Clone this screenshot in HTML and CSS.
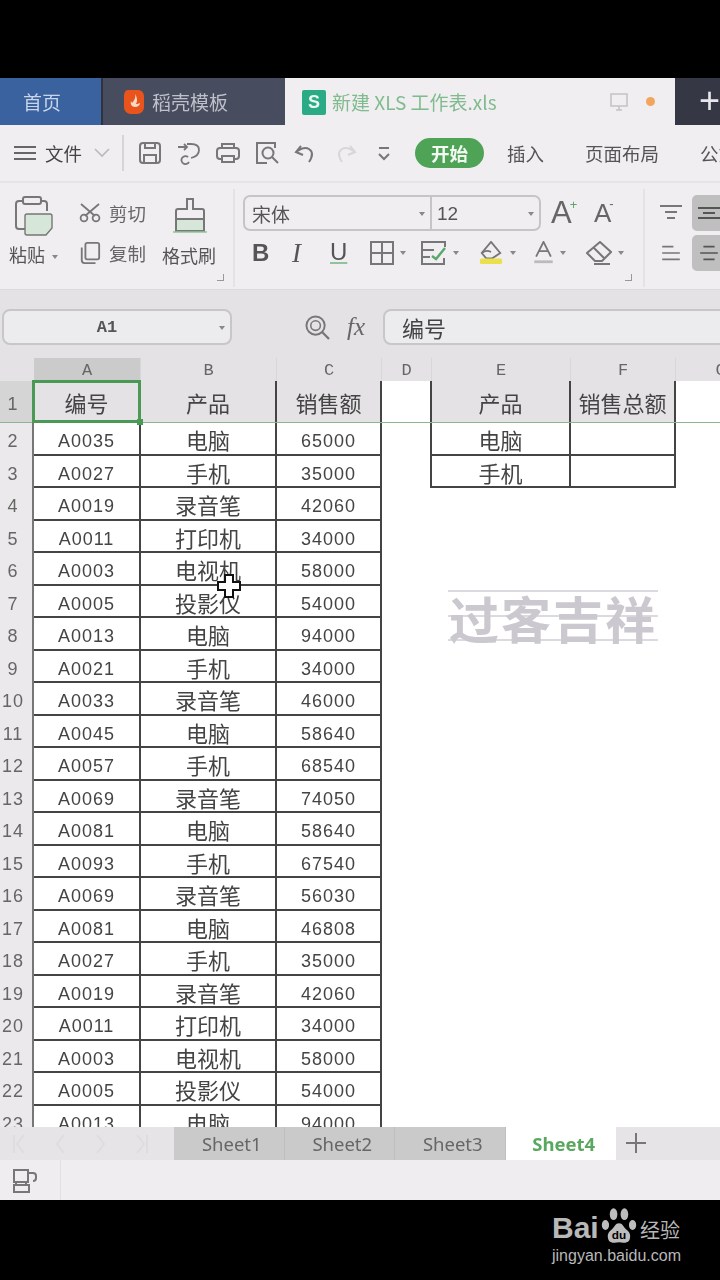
FILE: index.html
```html
<!DOCTYPE html>
<html lang="zh-CN">
<head>
    <meta charset="UTF-8">
    <meta name="viewport" content="width=device-width, initial-scale=1.0">
    <title>新建 XLS 工作表.xls</title>
    <link rel="stylesheet" href="styles.css">
</head>
<body>
    <div class="app">
        <!-- title tabs -->
        <div class="titlebar">
            <div class="tab-home">首页</div>
            <div class="tab-tpl">
                <svg class="tpl-logo" viewBox="0 0 22 26"><path d="M5 1h10c4 0 6 3 6 7v10c0 4-3 7-7 7H8c-4 0-7-3-7-7V8c0-4 1-7 4-7z" fill="#e8541c"/><path d="M12 5c1 4-1 7-3 9l-1-2c-1 3 1 6 4 6 3 0 5-2 5-4-2 1-3 1-4 1 2-3 1-7-1-10z" fill="#fbd9c4"/></svg>
                <span>稻壳模板</span>
            </div>
            <div class="tab-doc">
                <div class="s-logo">S</div>
                <span class="doc-name">新建 XLS 工作表.xls</span>
                <svg class="doc-screen" viewBox="0 0 20 20"><path d="M2 2h16v12H2zM10 14v4M7 18h6" fill="none" stroke="#c4c4c4" stroke-width="1.6"/></svg>
                <i class="doc-dot"></i>
            </div>
            <div class="tab-add">+</div>
        </div>

        <!-- quick access + menu tabs -->
        <div class="toolbar">
            <svg class="ico-menu" viewBox="0 0 22 16"><path d="M0 2h22M0 8h22M0 14h22" stroke="#666" stroke-width="2"/></svg>
            <span class="file-label">文件</span>
            <svg class="ico-chev" viewBox="0 0 16 10"><path d="M1 1l7 7 7-7" fill="none" stroke="#bbb" stroke-width="1.6"/></svg>
            <i class="tool-sep"></i>
            <div class="quick">
                <svg viewBox="0 0 24 24"><path d="M2 5q0-3 3-3h14q3 0 3 3v14q0 3-3 3H5q-3 0-3-3zM7 2v5h10V2M6 22v-8h12v8" fill="none" stroke="#777" stroke-width="2"/></svg>
                <svg viewBox="0 0 24 24"><path d="M1 6h9M7 3l3 3-3 3M10 3h4q8 0 8 6 0 6-8 8M11 16a4 4 0 1 0 1 5" fill="none" stroke="#777" stroke-width="1.8"/></svg>
                <svg viewBox="0 0 24 24"><path d="M6 7V3h12v4M6 18H4q-3 0-3-3V10q0-3 3-3h16q3 0 3 3v5q0 3-3 3h-2M6 15h12v6H6z" fill="none" stroke="#777" stroke-width="2"/></svg>
                <svg viewBox="0 0 24 24"><path d="M20 7V2H2v20h10" fill="none" stroke="#777" stroke-width="2"/><circle cx="13" cy="12" r="5.5" fill="none" stroke="#777" stroke-width="2"/><path d="M17 16l6 6" stroke="#777" stroke-width="2"/></svg>
                <svg viewBox="0 0 24 24"><path d="M7 5L2 11l7 3M2 11q8-6 13-3 6 4 0 13" fill="none" stroke="#777" stroke-width="2"/></svg>
                <svg viewBox="0 0 24 24"><path d="M17 5l5 6-7 3M22 11q-8-6-13-3-6 4 0 13" fill="none" stroke="#d8d6d8" stroke-width="2"/></svg>
                <svg viewBox="0 0 24 24"><path d="M7 7h10M7 13l5 5 5-5" fill="none" stroke="#777" stroke-width="2"/></svg>
            </div>
            <span class="menu-on">开始</span>
            <span class="menu-item item-insert">插入</span>
            <span class="menu-item item-layout">页面布局</span>
            <span class="menu-item item-formula">公式</span>
        </div>

        <!-- ribbon -->
        <div class="ribbon">
            <div class="rgroup clip">
                <div class="paste">
                    <svg class="ico-paste" viewBox="0 0 38 40"><path d="M8 5H4Q1 5 1 8v22q0 3 3 3h6" fill="none" stroke="#777" stroke-width="2"/><path d="M26 5h3q3 0 3 3v7" fill="none" stroke="#777" stroke-width="2"/><rect x="8" y="1" width="18" height="7" rx="2" fill="none" stroke="#777" stroke-width="2"/><path d="M12 18h23q2 0 2 2v12l-6 7H12q-2 0-2-2V20q0-2 2-2z" fill="#d6e6d9" stroke="#777" stroke-width="1.4"/></svg>
                    <span class="rlabel">粘贴<i class="caret"></i></span>
                </div>
                <div class="cutcopy">
                    <div class="mini"><svg viewBox="0 0 22 20"><path d="M20 1L6 13M2 1l14 12" fill="none" stroke="#777" stroke-width="1.8"/><circle cx="5" cy="15" r="3.4" fill="none" stroke="#777" stroke-width="1.8"/><circle cx="17" cy="15" r="3.4" fill="none" stroke="#777" stroke-width="1.8"/></svg><span>剪切</span></div>
                    <div class="mini"><svg viewBox="0 0 22 24"><rect x="6" y="1" width="15" height="18" rx="2" fill="none" stroke="#777" stroke-width="2"/><path d="M2 6v14q0 3 3 3h12" fill="none" stroke="#777" stroke-width="2"/></svg><span>复制</span></div>
                </div>
                <div class="brush">
                    <svg class="ico-brush" viewBox="0 0 36 36"><path d="M15 2h6v10h9q2 0 2 2v8H4v-8q0-2 2-2h9z" fill="none" stroke="#777" stroke-width="2"/><path d="M4 22h28v12H4z" fill="#d6e6d9" stroke="#777" stroke-width="2"/><path d="M1 35h34" stroke="#8fc49b" stroke-width="1.6"/></svg>
                    <span class="rlabel">格式刷</span>
                </div>
                <i class="corner"></i>
            </div>

            <div class="rgroup font">
                <div class="font-top">
                    <div class="font-box">
                        <div class="font-name">宋体<i class="caret"></i></div>
                        <div class="font-size">12<i class="caret"></i></div>
                    </div>
                    <span class="grow">A<sup>+</sup></span>
                    <span class="grow small">A<sup>-</sup></span>
                </div>
                <div class="font-btm">
                    <span class="fb fb-b">B</span>
                    <span class="fb fb-i">I</span>
                    <span class="fb fb-u">U</span>
                    <div class="fmt fmt-border"><svg viewBox="0 0 24 24"><path d="M1 1h22v22H1zM12 1v22M1 12h22" fill="none" stroke="#777" stroke-width="2"/></svg><i class="caret"></i></div>
                    <div class="fmt fmt-cond"><svg viewBox="0 0 26 24"><path d="M24 6V1H1v22h22v-6M1 9h12M1 16h8" fill="none" stroke="#777" stroke-width="2"/><path d="M11 15l4 3 9-11" fill="none" stroke="#5aa869" stroke-width="2.4"/></svg><i class="caret"></i></div>
                    <div class="fmt fmt-fill"><svg viewBox="0 0 26 26"><path d="M13 1l10 12-9 6H8L3 13z" fill="none" stroke="#777" stroke-width="2"/><path d="M3 13q5-4 10-1" fill="none" stroke="#777" stroke-width="2"/><rect x="1" y="19" width="24" height="6" rx="2" fill="#e9e04a"/></svg><i class="caret"></i></div>
                    <div class="fmt fmt-color"><svg viewBox="0 0 22 26"><path d="M3 17L11 1l8 16M6 11h10" fill="none" stroke="#777" stroke-width="2"/><rect x="1" y="21" width="20" height="3" fill="#bbb"/></svg><i class="caret"></i></div>
                    <div class="fmt fmt-erase"><svg viewBox="0 0 26 24"><path d="M14 1l11 10-9 9H9L1 12zM7 6l11 11M8 23h16" fill="none" stroke="#777" stroke-width="2"/></svg><i class="caret"></i></div>
                </div>
                <i class="corner"></i>
            </div>

            <div class="rgroup align">
                <div class="align-row">
                    <svg class="ico-al" viewBox="0 0 22 16"><path d="M0 1h22M5 7h12M7 13h8" stroke="#777" stroke-width="2"/></svg>
                    <span class="al-on"><svg class="ico-al" viewBox="0 0 22 16"><path d="M0 3h22M5 8h12M0 13h22" stroke="#555" stroke-width="2"/></svg></span>
                </div>
                <div class="align-row">
                    <svg class="ico-al" viewBox="0 0 22 20"><path d="M0 2h14M0 10h22M0 18h22" stroke="#777" stroke-width="2"/></svg>
                    <span class="al-on"><svg class="ico-al" viewBox="0 0 22 20"><path d="M4 2h14M0 10h22M4 18h14" stroke="#555" stroke-width="2"/></svg></span>
                </div>
            </div>
        </div>

        <!-- formula bar -->
        <div class="formula">
            <div class="namebox">A1<i class="caret"></i></div>
            <svg class="ico-zoom" viewBox="0 0 26 26"><circle cx="11" cy="11" r="9.5" fill="none" stroke="#777" stroke-width="2"/><circle cx="11" cy="11" r="5" fill="none" stroke="#777" stroke-width="1.6"/><path d="M18 18l7 7" stroke="#777" stroke-width="2.4"/></svg>
            <span class="fx">fx</span>
            <div class="fbox">编号</div>
        </div>

        <!-- sheet -->
        <div class="sheet">
            <div class="row head">
                <span class="corner-cell"></span><span class="col sel">A</span><span class="col">B</span><span class="col">C</span><span class="col">D</span><span class="col">E</span><span class="col">F</span><span class="col">G</span>
            </div>
            <div class="row first">
                <span class="rh sel">1</span><span class="c hd">编号</span><span class="c hd">产品</span><span class="c hd">销售额</span><span class="c gap"></span><span class="c hd">产品</span><span class="c hd">销售总额</span>
            </div>
            <div class="row"><span class="rh">2</span><span class="c code">A0035</span><span class="c">电脑</span><span class="c num">65000</span><span class="c gap"></span><span class="c">电脑</span><span class="c"></span></div>
            <div class="row"><span class="rh">3</span><span class="c code">A0027</span><span class="c">手机</span><span class="c num">35000</span><span class="c gap"></span><span class="c">手机</span><span class="c"></span></div>
            <div class="row"><span class="rh">4</span><span class="c code">A0019</span><span class="c">录音笔</span><span class="c num">42060</span></div>
            <div class="row"><span class="rh">5</span><span class="c code">A0011</span><span class="c">打印机</span><span class="c num">34000</span></div>
            <div class="row"><span class="rh">6</span><span class="c code">A0003</span><span class="c">电视机</span><span class="c num">58000</span></div>
            <div class="row"><span class="rh">7</span><span class="c code">A0005</span><span class="c">投影仪</span><span class="c num">54000</span></div>
            <div class="row"><span class="rh">8</span><span class="c code">A0013</span><span class="c">电脑</span><span class="c num">94000</span></div>
            <div class="row"><span class="rh">9</span><span class="c code">A0021</span><span class="c">手机</span><span class="c num">34000</span></div>
            <div class="row"><span class="rh">10</span><span class="c code">A0033</span><span class="c">录音笔</span><span class="c num">46000</span></div>
            <div class="row"><span class="rh">11</span><span class="c code">A0045</span><span class="c">电脑</span><span class="c num">58640</span></div>
            <div class="row"><span class="rh">12</span><span class="c code">A0057</span><span class="c">手机</span><span class="c num">68540</span></div>
            <div class="row"><span class="rh">13</span><span class="c code">A0069</span><span class="c">录音笔</span><span class="c num">74050</span></div>
            <div class="row"><span class="rh">14</span><span class="c code">A0081</span><span class="c">电脑</span><span class="c num">58640</span></div>
            <div class="row"><span class="rh">15</span><span class="c code">A0093</span><span class="c">手机</span><span class="c num">67540</span></div>
            <div class="row"><span class="rh">16</span><span class="c code">A0069</span><span class="c">录音笔</span><span class="c num">56030</span></div>
            <div class="row"><span class="rh">17</span><span class="c code">A0081</span><span class="c">电脑</span><span class="c num">46808</span></div>
            <div class="row"><span class="rh">18</span><span class="c code">A0027</span><span class="c">手机</span><span class="c num">35000</span></div>
            <div class="row"><span class="rh">19</span><span class="c code">A0019</span><span class="c">录音笔</span><span class="c num">42060</span></div>
            <div class="row"><span class="rh">20</span><span class="c code">A0011</span><span class="c">打印机</span><span class="c num">34000</span></div>
            <div class="row"><span class="rh">21</span><span class="c code">A0003</span><span class="c">电视机</span><span class="c num">58000</span></div>
            <div class="row"><span class="rh">22</span><span class="c code">A0005</span><span class="c">投影仪</span><span class="c num">54000</span></div>
            <div class="row"><span class="rh">23</span><span class="c code">A0013</span><span class="c">电脑</span><span class="c num">94000</span></div>

            <!-- things floating over the cells -->
            <div class="selbox"><i></i></div>
            <svg class="cursor" viewBox="0 0 24 24"><path d="M8 1h8v7h7v8h-7v7H8v-7H1V8h7z" fill="#fff" stroke="#111" stroke-width="2"/></svg>
            <div class="stamp">过客吉祥</div>
        </div>

        <!-- sheet tabs -->
        <div class="tabsbar">
            <div class="nav">
                <svg viewBox="0 0 14 22"><path d="M2 2v18M12 2L5 11l7 9" fill="none" stroke="#dedcde" stroke-width="2"/></svg>
                <svg viewBox="0 0 14 22"><path d="M11 2L4 11l7 9" fill="none" stroke="#dedcde" stroke-width="2"/></svg>
                <svg viewBox="0 0 14 22"><path d="M3 2l7 9-7 9" fill="none" stroke="#dedcde" stroke-width="2"/></svg>
                <svg viewBox="0 0 14 22"><path d="M12 2v18M2 2l7 9-7 9" fill="none" stroke="#dedcde" stroke-width="2"/></svg>
            </div>
            <span class="stab">Sheet1</span>
            <span class="stab">Sheet2</span>
            <span class="stab">Sheet3</span>
            <span class="stab on">Sheet4</span>
            <svg class="ico-plus" viewBox="0 0 20 20"><path d="M10 0v20M0 10h20" stroke="#777" stroke-width="2"/></svg>
        </div>

        <div class="statusbar">
            <div class="status-left">
                <svg viewBox="0 0 26 26"><path d="M2 2h14v12H2zM16 5h5q3 0 3 3v2q0 3-3 3M4 14v3M14 14v3M2 17h15v7H2z" fill="none" stroke="#777" stroke-width="2"/></svg>
            </div>
        </div>
    </div>

    <div class="brand">
        <div class="brand-top">
            <span class="bai">Bai</span>
            <svg class="paw" viewBox="0 0 42 42"><ellipse cx="6" cy="20" rx="4" ry="5.5" fill="#bdbdbd"/><ellipse cx="15" cy="8" rx="4.2" ry="6.5" fill="#bdbdbd"/><ellipse cx="27" cy="8" rx="4.2" ry="6.5" fill="#bdbdbd"/><ellipse cx="36" cy="20" rx="4" ry="5.5" fill="#bdbdbd"/><path d="M21 18c-4 0-5 4-8 7-4 3-5 6-4 10 1 5 7 5 12 4 5 1 11 1 12-4 1-4 0-7-4-10-3-3-4-7-8-7z" fill="#bdbdbd"/><text x="21" y="35" text-anchor="middle" class="paw-du">du</text></svg>
            <span class="jy">经验</span>
        </div>
        <div class="brand-url">jingyan.baidu.com</div>
    </div>
</body>
</html>
```

FILE: styles.css
```css
html, body {
    margin: 0;
    height: 1280px;
    overflow: hidden;
    background: #000;
}
body {
    font-family: "Noto Sans CJK SC", "Noto Sans", sans-serif;
    color: #555;
}
i {
    font-style: normal;
}
svg {
    display: block;
    flex: none;
}
.app {
    margin-top: 78px;
    width: 720px;
    height: 1122px;
    display: flex;
    flex-direction: column;
    filter: blur(0.6px);
    background: #f0eef0;
}

/* title tabs */
.titlebar {
    height: 47px;
    display: flex;
    background: #2f3240;
    font-size: 19px;
    flex: none;
}
.tab-home {
    width: 101px;
    flex: none;
    padding-left: 23px;
    box-sizing: border-box;
    background: #3a629f;
    color: #c8d5ea;
    line-height: 48px;
}
.tab-tpl {
    width: 182px;
    flex: none;
    margin-left: 2px;
    padding-left: 20px;
    box-sizing: border-box;
    background: #474c5e;
    color: #bfc1ca;
    display: flex;
    align-items: center;
    gap: 7px;
}
.tpl-logo {
    width: 22px;
    height: 26px;
}
.tab-doc {
    width: 390px;
    flex: none;
    padding-left: 17px;
    box-sizing: border-box;
    background: #f0eef0;
    display: flex;
    align-items: center;
}
.s-logo {
    width: 24px;
    height: 25px;
    flex: none;
    margin-top: 2px;
    border-radius: 2px;
    background: #2bab85;
    color: #e9f6f1;
    font: bold 18px/25px "Liberation Sans", sans-serif;
    text-align: center;
    margin-right: 6px;
}
.doc-name {
    width: 277px;
    flex: none;
    color: #7fbb8e;
    font-size: 19px;
    white-space: nowrap;
}
.doc-screen {
    width: 20px;
    height: 20px;
}
.doc-dot {
    width: 9px;
    height: 9px;
    flex: none;
    border-radius: 50%;
    background: #f2a55e;
    margin-left: 17px;
}
.tab-add {
    width: 45px;
    flex: none;
    background: #353744;
    color: #e8e8ec;
    font: 36px/46px "Liberation Sans", sans-serif;
    text-align: right;
    box-sizing: border-box;
}

/* toolbar */
.toolbar {
    height: 58px;
    flex: none;
    display: flex;
    align-items: center;
    padding-left: 14px;
    white-space: nowrap;
    overflow: hidden;
    border-bottom: 2px solid #e6e4e6;
    box-sizing: border-box;
    font-size: 18.5px;
}
.toolbar > * {
    flex: none;
}
.ico-menu {
    width: 22px;
    height: 16px;
}
.file-label {
    margin-left: 9px;
    width: 49px;
    color: #444;
}
.ico-chev {
    width: 16px;
    height: 10px;
}
.tool-sep {
    width: 2px;
    height: 36px;
    margin: 0 14px 0 12px;
    background: #d6d4d6;
}
.quick {
    display: flex;
    gap: 15px;
}
.quick svg {
    width: 24px;
    height: 24px;
}
.menu-on {
    margin-left: 19px;
    width: 69px;
    height: 30px;
    border-radius: 15px;
    background: #4ea356;
    color: #f2f8f2;
    font-weight: 700;
    text-align: center;
    line-height: 30px;
}
.menu-item {
    color: #555;
}
.item-insert {
    margin-left: 23px;
}
.item-layout {
    margin-left: 41px;
}
.item-formula {
    margin-left: 41px;
}

/* ribbon */
.ribbon {
    height: 107px;
    flex: none;
    display: flex;
    box-sizing: border-box;
    padding-bottom: 2px;
    background: #f0eef0;
    border-bottom: 1px solid #dcdadc;
}
.rgroup {
    position: relative;
    flex: none;
}
.rgroup.clip {
    width: 235px;
    box-sizing: border-box;
    margin-top: 6px;
    border-right: 2px solid #e4e2e4;
    display: flex;
    padding-left: 9px;
}
.paste {
    width: 70px;
    flex: none;
    display: flex;
    flex-direction: column;
}
.ico-paste {
    width: 38px;
    height: 40px;
    margin: 7px 0 0 6px;
}
.rlabel {
    display: block;
    margin-top: 5px;
    font-size: 18px;
    color: #555;
    white-space: nowrap;
}
.caret {
    display: inline-block;
    width: 0;
    height: 0;
    margin-left: 7px;
    vertical-align: middle;
    border: 3.5px solid transparent;
    border-top: 4px solid #888;
    border-bottom: 0;
}
.cutcopy {
    width: 83px;
    flex: none;
    display: flex;
    flex-direction: column;
    gap: 12px;
    padding-top: 10px;
}
.mini {
    display: flex;
    align-items: center;
    gap: 8px;
    height: 28px;
    font-size: 18.5px;
    color: #666;
    white-space: nowrap;
}
.mini svg {
    width: 22px;
    height: 22px;
}
.brush {
    width: 58px;
    flex: none;
}
.ico-brush {
    width: 36px;
    height: 36px;
    margin: 8px 0 0 10px;
}
.brush .rlabel {
    margin-top: 9px;
}
.corner {
    position: absolute;
    right: 9px;
    bottom: 6px;
    width: 6px;
    height: 6px;
    border-right: 1.5px solid #999;
    border-bottom: 1.5px solid #999;
}
.rgroup.font {
    width: 410px;
    box-sizing: border-box;
    margin-top: 6px;
    padding: 6px 0 0 8px;
    border-right: 2px solid #e4e2e4;
}
.font-top {
    display: flex;
    align-items: center;
    height: 36px;
}
.font-box {
    width: 298px;
    height: 36px;
    flex: none;
    box-sizing: border-box;
    display: flex;
    border: 2px solid #c6c4c6;
    border-radius: 7px;
    font-size: 19px;
    line-height: 33px;
    color: #555;
}
.font-name, .font-size {
    position: relative;
    box-sizing: border-box;
    padding-left: 7px;
}
.font-name {
    width: 187px;
    flex: none;
    border-right: 2px solid #c6c4c6;
}
.font-size {
    flex: 1;
    padding-left: 5px;
    font-family: "Liberation Sans", sans-serif;
}
.font-name .caret, .font-size .caret {
    position: absolute;
    right: 5px;
    top: 15px;
}
.grow {
    margin-left: 10px;
    width: 33px;
    flex: none;
    font: 31px/36px "Liberation Sans", sans-serif;
    color: #666;
    white-space: nowrap;
}
.grow.small {
    font-size: 26px;
}
.grow sup {
    font-size: 13px;
    line-height: 0;
    vertical-align: 14px;
    color: #5aa869;
    margin-left: -2px;
}
.grow.small sup {
    color: #666;
}
.font-btm {
    display: flex;
    align-items: center;
    height: 36px;
    margin-top: 4px;
    padding-left: 9px;
    color: #555;
}
.fb {
    display: block;
    flex: none;
    width: 40px;
    font: 24px/36px "Liberation Sans", sans-serif;
    box-sizing: border-box;
}
.fb-b {
    font-weight: 700;
}
.fb-i {
    width: 38px;
    font-family: "Liberation Serif", serif;
    font-style: italic;
    font-size: 27px;
}
.fb-u {
    height: 26px;
    line-height: 24px;
    text-decoration: underline;
    text-decoration-color: #8fc49b;
}
.fmt {
    display: flex;
    align-items: center;
    flex: none;
}
.fmt svg {
    width: 24px;
    height: 24px;
}
.fmt .caret {
    margin-left: 6px;
}
.fmt-cond {
    margin-left: 15px;
}
.fmt-cond svg, .fmt-fill svg {
    width: 26px;
}
.fmt-fill {
    margin-left: 19px;
}
.fmt-color {
    margin-left: 17px;
}
.fmt-color svg {
    width: 21px;
}
.fmt-erase {
    margin-left: 20px;
}
.fmt-erase svg {
    width: 26px;
}
.rgroup.font .corner {
    right: 11px;
}
.rgroup.align {
    flex: 1;
    margin-top: 12px;
    padding-left: 15px;
    display: flex;
    flex-direction: column;
    gap: 4px;
}
.align-row {
    display: flex;
    align-items: center;
    height: 36px;
    gap: 10px;
}
.ico-al {
    width: 22px;
    height: 16px;
}
.al-on {
    width: 40px;
    height: 36px;
    flex: none;
    border-radius: 5px;
    background: #c0bfc0;
    padding: 10px 0 0 6px;
    box-sizing: border-box;
}

/* formula bar */
.formula {
    height: 68px;
    flex: none;
    display: flex;
    align-items: center;
    padding: 6px 0 0 2px;
    box-sizing: border-box;
    background: #e4e2e4;
    overflow: hidden;
}
.formula > * {
    flex: none;
}
.namebox {
    position: relative;
    width: 230px;
    height: 36px;
    box-sizing: border-box;
    border: 2px solid #c8c6c8;
    border-radius: 8px;
    background: #ececee;
    font: bold 17px/33px "Liberation Mono", monospace;
    color: #555;
    text-align: center;
    padding-right: 20px;
}
.namebox .caret {
    position: absolute;
    right: 5px;
    top: 15px;
}
.ico-zoom {
    width: 25px;
    height: 25px;
    margin-left: 73px;
}
.fx {
    width: 36px;
    margin-left: 17px;
    font: italic 25px/36px "Liberation Serif", serif;
    color: #666;
}
.fbox {
    width: 360px;
    height: 36px;
    box-sizing: border-box;
    border: 2px solid #c8c6c8;
    border-radius: 8px;
    background: #ececee;
    padding-left: 17px;
    font-size: 22px;
    line-height: 32px;
    color: #444;
}

/* sheet */
.sheet {
    position: relative;
    height: 769px;
    flex: none;
    overflow: hidden;
    background: #fff;
}
.row {
    display: grid;
    grid-template-columns: 34px 107px 136px 105px 50px 139px 105px 90px;
    grid-template-rows: 100%;
    height: 32.5px;
}
.row > span {
    min-height: 0;
    overflow: hidden;
}
.row.head {
    height: 23px;
    background: #e4e2e4;
}
.col {
    font: 17px/25px "Liberation Mono", monospace;
    color: #666;
    text-align: center;
    border-right: 1px solid #d8d6d8;
}
.col.sel {
    background: #cccbcc;
}
.row.first {
    height: 42px;
    box-sizing: border-box;
    border-bottom: 1px solid #8db58f;
}
.rh {
    background: #ebe9eb;
    border-right: 2px solid #777;
    box-sizing: border-box;
    font: 18px/36px "Liberation Sans", sans-serif;
    letter-spacing: 1px;
    color: #666;
    text-align: center;
    padding-right: 6px;
}
.rh.sel {
    background: #d6d5d6;
    line-height: 46px;
}
.c {
    box-sizing: border-box;
    border-right: 2px solid #444;
    border-bottom: 2px solid #444;
    font-size: 22px;
    line-height: 33px;
    color: #444;
    text-align: center;
    white-space: nowrap;
}
.c.code, .c.num {
    font: 18px/36px "Liberation Sans", sans-serif;
    letter-spacing: 1px;
    color: #444;
}
.c.gap {
    border-bottom: 0;
}
.c.hd {
    background: #e4e2e4;
    border-bottom: 0;
    line-height: 43px;
}
.first .c.gap {
    background: #fff;
}
.selbox {
    position: absolute;
    left: 32px;
    top: 22px;
    width: 109px;
    height: 43px;
    box-sizing: border-box;
    border: 3px solid #4a9a55;
}
.selbox i {
    position: absolute;
    right: -5px;
    bottom: -5px;
    width: 6px;
    height: 6px;
    background: #4a9a55;
}
.cursor {
    position: absolute;
    left: 217px;
    top: 216px;
    width: 24px;
    height: 24px;
}
.stamp {
    position: absolute;
    left: 448px;
    top: 232px;
    width: 210px;
    height: 51px;
    box-sizing: border-box;
    border-top: 2px solid #dcdadf;
    border-bottom: 2px solid #dcdadf;
    background: linear-gradient(#dcdadf, #dcdadf) 0 50% / 100% 2px no-repeat;
    font-size: 50px;
    font-weight: 700;
    line-height: 50px;
    letter-spacing: 2px;
    text-align: center;
    white-space: nowrap;
    color: #cbc9cf;
}

/* sheet tabs */
.tabsbar {
    height: 33px;
    flex: none;
    display: flex;
    align-items: stretch;
    background: #e6e4e6;
}
.nav {
    width: 174px;
    flex: none;
    display: flex;
    align-items: center;
    gap: 27px;
    padding-left: 12px;
    box-sizing: border-box;
}
.nav svg {
    width: 14px;
    height: 22px;
}
.stab {
    width: 110.5px;
    flex: none;
    background: #cbcacb;
    border-right: 1px solid #bfbebf;
    box-sizing: border-box;
    padding-left: 6px;
    font: 18.5px/34px "Noto Sans", sans-serif;
    color: #666;
    text-align: center;
}
.stab.on {
    background: #fff;
    border-right: 0;
    color: #5aa85f;
    font-weight: 700;
}
.ico-plus {
    width: 20px;
    height: 20px;
    margin: 6px 0 0 10px;
}
.statusbar {
    height: 40px;
    flex: none;
    background: #efedef;
}
.status-left {
    width: 61px;
    height: 40px;
    box-sizing: border-box;
    border-right: 1px solid #e2e0e2;
    padding: 8px 0 0 12px;
}
.status-left svg {
    width: 26px;
    height: 26px;
}

/* watermark in the black strip */
.brand {
    position: absolute;
    left: 552px;
    top: 1203px;
    width: 130px;
    color: #b8b8b8;
}
.brand-top {
    display: flex;
    align-items: flex-end;
    height: 42px;
}
.bai {
    font: bold 30px/34px "Liberation Sans", sans-serif;
    width: 48px;
}
.paw {
    width: 38px;
    height: 40px;
    margin-bottom: -1px;
}
.paw-du {
    font: bold 13px "Liberation Sans", sans-serif;
    fill: #000;
}
.jy {
    font-size: 20px;
    line-height: 30px;
    margin-left: 2px;
    white-space: nowrap;
}
.brand-url {
    margin-top: 1px;
    font: 16px/20px "Liberation Sans", sans-serif;
    white-space: nowrap;
}
```
